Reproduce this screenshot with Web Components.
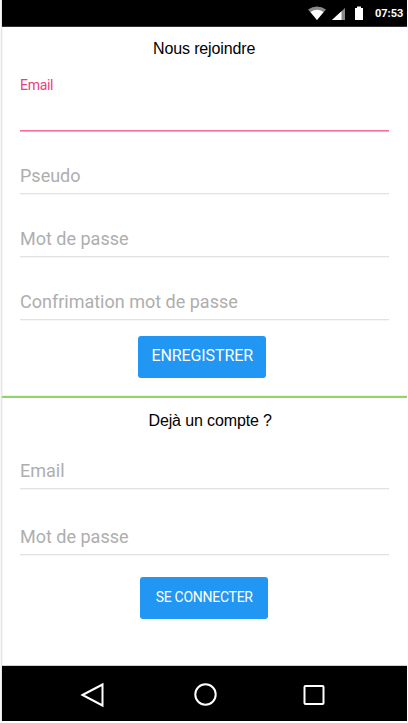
<!DOCTYPE html>
<html lang="fr"><head><meta charset="utf-8"><title>Nous rejoindre</title>
<style>html,body{margin:0;background:#fff}body{width:408px;height:723px;overflow:hidden}</style></head>
<body>
<phone-screen>
  <status-bar slot="top">07:53</status-bar>
  <form-section style="height:369px">
    <section-title style="padding:11px 0 0 151px">Nous rejoindre</section-title>
    <text-field active style="height:72px">Email</text-field>
    <text-field style="height:63px">Pseudo</text-field>
    <text-field style="height:63px">Mot de passe</text-field>
    <text-field style="height:63px">Confrimation mot de passe</text-field>
    <action-button style="margin:16px 0 0 136px;--fs:16px;--pb:3px;--ls:-.1px">ENREGISTRER</action-button>
  </form-section>
  <section-divider></section-divider>
  <form-section style="height:267px">
    <section-title style="padding:12px 0 0 146.5px">Dejà un compte ?</section-title>
    <text-field style="height:58px">Email</text-field>
    <text-field style="height:66px">Mot de passe</text-field>
    <action-button style="margin:22px 0 0 138px;--fs:14px;--pb:2px;--ls:-.27px">SE CONNECTER</action-button>
  </form-section>
  <nav-bar slot="bottom"></nav-bar>
</phone-screen>
<script>
function define(name, html){
  customElements.define(name, class extends HTMLElement{
    constructor(){super();this.attachShadow({mode:'open'}).innerHTML=html;}
  });
}
define('phone-screen',`<style>:host{display:flex;flex-direction:column;box-sizing:border-box;width:407px;height:721px;padding-left:2px;background:linear-gradient(90deg,#f8f8f8 1px,#e5e5e5 1px,#e5e5e5 2px,#f6f6f6 2px,#f6f6f6 3px,#fff 3px)}</style><slot name="top"></slot><slot></slot><slot name="bottom"></slot>`);
define('status-bar',`<style>:host{display:flex;box-sizing:border-box;height:27px;background:#000;border-bottom:1px solid #333;color:#fff;font:bold 11px/28px Roboto,sans-serif;justify-content:flex-end;padding-right:3px}svg{flex:none;width:62px;height:26px;margin-right:6px}span{width:29px;white-space:nowrap}</style>
<svg viewBox="307 0 62 26"><path d="M308 9.4Q317 3.6 326 9.4L317 20Z" fill="#888"/><path d="M310.5 12Q317 7.3 323.5 12L317 20Z" fill="#fff"/><path d="M332 20L345 8V20Z" fill="#888"/><path d="M332 20L341.5 11.2V20Z" fill="#fff"/><path d="M357 6.5h4V8h2v12h-8V8h2Z" fill="#fff"/></svg><span><slot></slot></span>`);
define('form-section',`<style>:host{display:flex;flex-direction:column;box-sizing:border-box;flex:none}</style><slot></slot>`);
define('section-title',`<style>:host{display:block;color:#000;font:16px/21px "Liberation Sans",sans-serif;letter-spacing:-.13px;white-space:nowrap}</style><slot></slot>`);
define('text-field',`<style>:host{display:flex;box-sizing:border-box;flex:none;align-items:flex-end;margin:0 18.5px 0 18px;padding-bottom:6px;border-bottom:1px solid #e2e2e2;box-shadow:0 1px #f6f6f6;color:#aeaeae;font:18px/22px Roboto,sans-serif;letter-spacing:0}:host([active]){align-items:flex-start;color:#e9407c;font-size:14px;line-height:18px;letter-spacing:-.3px;border-bottom-color:#f46d9b;box-shadow:0 1px #f8a9c4;padding:17px 0 0}</style><slot></slot>`);
define('action-button',`<style>:host{display:block}button{display:block;box-sizing:border-box;width:128.4px;height:42px;border:0;border-radius:3px;padding:0 0 var(--pb);background:#2196f3;color:#fff;font:var(--fs)/20px Roboto,sans-serif;letter-spacing:var(--ls);white-space:nowrap;text-align:center}</style><button><slot></slot></button>`);
define('section-divider',`<style>:host{display:block;flex:none;height:2px;background:#92d46a;box-shadow:0 -1px #e9f6e1}</style>`);
define('nav-bar',`<style>:host{display:block;flex:none;box-sizing:border-box;height:56px;background:#000;border-top:1px solid #ccd3d3}svg{display:block;width:405px;height:55px}</style>
<svg viewBox="2 666 405 55" fill="none" stroke="#fff" stroke-width="2"><path d="M82.5 695L102.5 684.5V705.5Z"/><circle cx="205.5" cy="694.5" r="10.2"/><rect x="304.5" y="686" width="19" height="18" rx="1"/></svg>`);
</script>
</body></html>
